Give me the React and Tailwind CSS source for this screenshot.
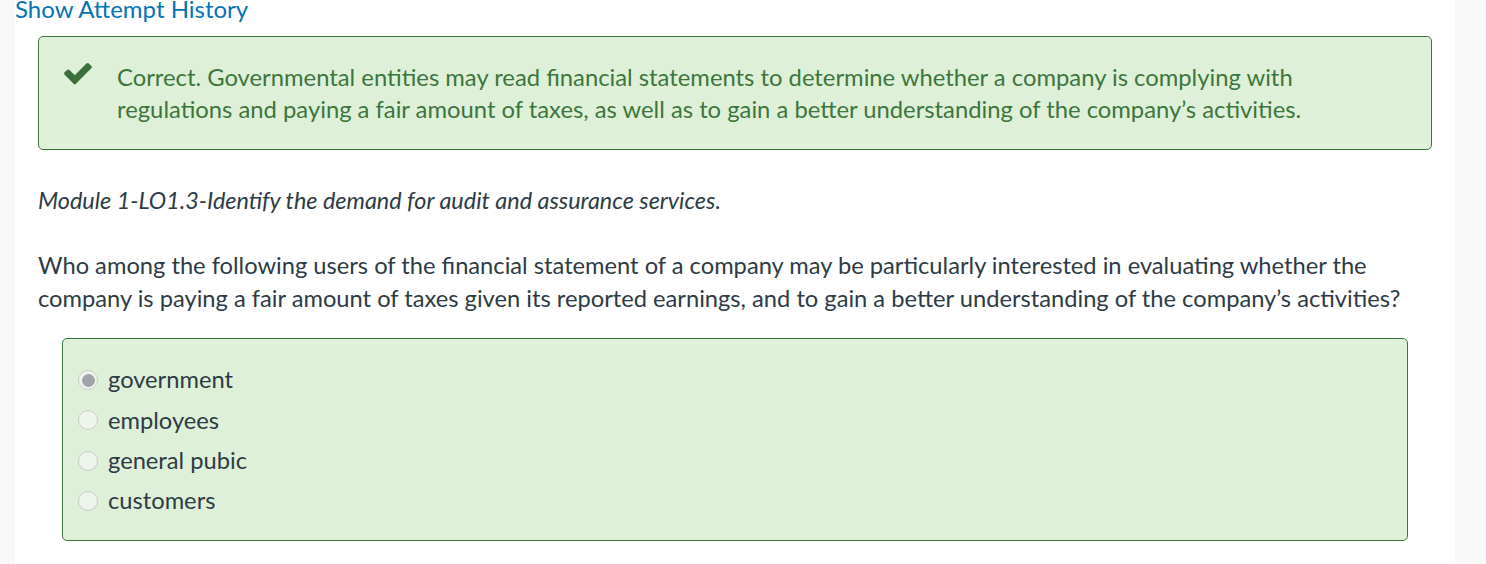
import React from 'react'

const answers = [
 { label: 'government', checked: true },
 { label: 'employees', checked: false },
 { label: 'general pubic', checked: false },
 { label: 'customers', checked: false },
]

function CheckIcon() {
 return (
 <svg viewBox="0 0 1792 1792" className="w-[32px] h-[32px] shrink-0 mt-[-4px]" fill="#3b6f3b">
 <path d="M1671 566q0 40-28 68l-724 724-136 136q-28 28-68 28t-68-28l-136-136-362-362q-28-28-28-68t28-68l136-136q28-28 68-28t68 28l294 295 656-657q28-28 68-28t68 28l136 136q28 28 28 68z" />
 </svg>
 )
}

function Radio({ checked }) {
 return (
 <span className="w-[20px] h-[20px] rounded-full border border-[#c8cbc8] bg-[#eef5ec] flex items-center justify-center shrink-0">
 {checked && <span className="w-[13px] h-[13px] rounded-full bg-[#a3a4aa]" />}
 </span>
 )
}

export default function App() {
 return (
 <div className="min-h-screen bg-[#f8f8f8] text-[23.7px] text-[#2d3b45]" style={{ fontFamily: 'Lato, "Open Sans", sans-serif' }}>
 <div className="ml-[15px] w-[1440px] min-h-screen bg-white overflow-hidden">
 {/* attempt history link, cut off at the top */}
 <div className="mt-[-8px] leading-[33px] text-[24px]">
 <a className="text-[#0374b5]">Show Attempt History</a>
 </div>

 <div className="px-[23px]">
 {/* feedback */}
 <div className="mt-[11px] flex gap-[23px] bg-[#dff0d8] border border-[#3c763d] rounded-[5px] pl-[23px] pr-[60px] py-6 text-[#3c763d] text-[23.8px] leading-[32px]">
 <CheckIcon />
 <p>
 Correct. Governmental entities may read financial statements to determine whether a company is complying with regulations and paying a fair amount of taxes, as well as to gain a better understanding of the company’s activities.
 </p>
 </div>

 <p className="mt-[34px] italic text-[23.4px] leading-[32px]">
 Module 1-LO1.3-Identify the demand for audit and assurance services.
 </p>

 <p className="mt-[33px] leading-[33px]">
 Who among the following users of the financial statement of a company may be particularly interested in evaluating whether the company is paying a fair amount of taxes given its reported earnings, and to gain a better understanding of the company’s activities?
 </p>

 {/* answers */}
 <div className="mt-[23px] mx-6 bg-[#dff0d8] border border-[#3c763d] rounded-[5px] px-[15px] pt-[21px] pb-[19px] flex flex-col">
 {answers.map((a) => (
 <label key={a.label} className="flex items-center gap-[10px] h-[40.3px]">
 <Radio checked={a.checked} />
 <span>{a.label}</span>
 </label>
 ))}
 </div>
 </div>
 </div>
 </div>
 )
}
